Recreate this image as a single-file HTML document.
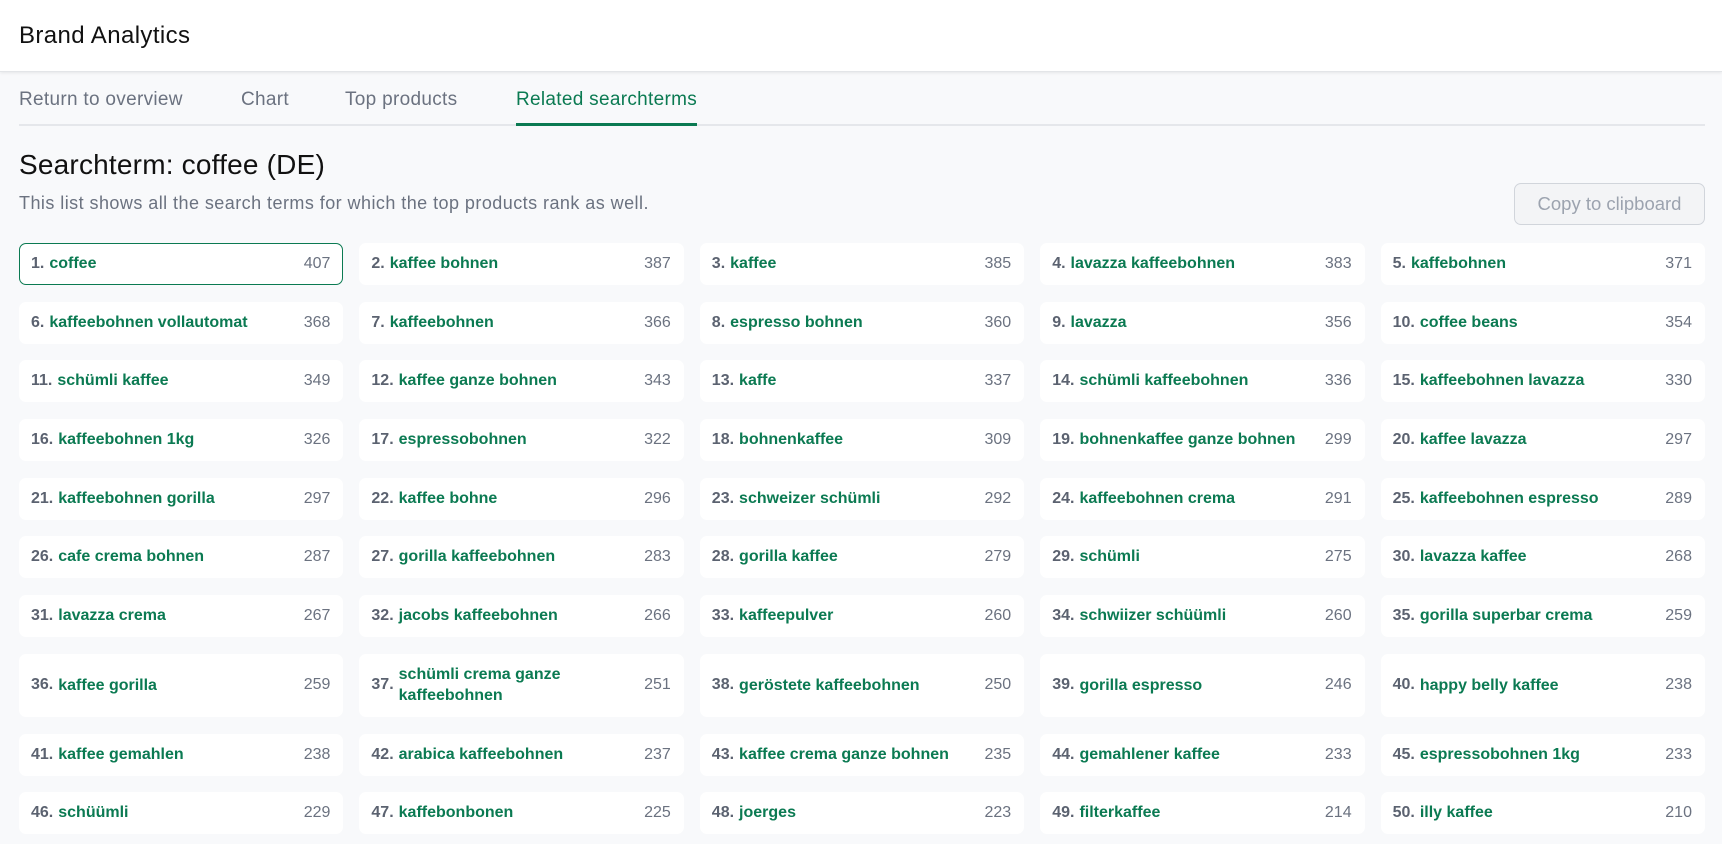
<!DOCTYPE html>
<html><head><meta charset="utf-8"><style>
*{box-sizing:border-box;margin:0;padding:0}
body{width:1722px;height:844px;overflow:hidden;background:#f8f9fb;font-family:"Liberation Sans",sans-serif;color:#111}
.hdr{height:72px;background:#fff;border-bottom:1px solid #e3e5e8;box-shadow:0 1px 3px rgba(0,0,0,.08);padding-left:19px;font-size:24px;letter-spacing:0.4px;line-height:72px;color:#111}
.tabs{position:absolute;top:72px;left:19px;right:17px;height:54px;border-bottom:2px solid #e5e7eb}
.tab{position:absolute;top:17px;font-size:19px;letter-spacing:0.3px;color:#6b7280;}
.tab.act{color:#0b7a52;height:37px;border-bottom:3px solid #0b7a52}
h1{position:absolute;top:149px;left:19px;font-size:28px;letter-spacing:0.2px;font-weight:normal;color:#111}
.sub{position:absolute;top:193px;left:19px;font-size:18px;letter-spacing:0.45px;color:#6b7280}
.btn{position:absolute;left:1514px;top:183px;width:191px;height:42px;border:1px solid #d1d5db;border-radius:7px;background:#f3f4f6;color:#9ca3af;font-size:18.5px;text-align:center;line-height:40px}
.grid{position:absolute;top:243px;left:19px;width:1686px;display:grid;grid-template-columns:repeat(5,1fr);column-gap:16px;row-gap:16.7px}
.c{background:#fff;border-radius:7px;height:42px;display:flex;align-items:center;padding:0 12px 0 11px;font-size:16px;font-weight:bold;border:1px solid #fff}
.c.sel{border-color:#0b7a52}
.c .n{color:#5b6270;margin-right:5px}
.c .t{color:#0b7a52;flex:1}
.c .v{color:#6b7280;font-weight:normal}
.tall{height:63px}
.tall .t{line-height:21px}
</style></head><body>
<div class="hdr">Brand Analytics</div>
<div class="tabs">
<span class="tab" style="left:0">Return to overview</span>
<span class="tab" style="left:222px">Chart</span>
<span class="tab" style="left:326px">Top products</span>
<span class="tab act" style="left:497px">Related searchterms</span>
</div>
<h1>Searchterm: coffee (DE)</h1>
<div class="sub">This list shows all the search terms for which the top products rank as well.</div>
<div class="btn">Copy to clipboard</div>
<div class="grid">
<div class="c sel"><span class="n">1.</span><span class="t">coffee</span><span class="v">407</span></div>
<div class="c"><span class="n">2.</span><span class="t">kaffee bohnen</span><span class="v">387</span></div>
<div class="c"><span class="n">3.</span><span class="t">kaffee</span><span class="v">385</span></div>
<div class="c"><span class="n">4.</span><span class="t">lavazza kaffeebohnen</span><span class="v">383</span></div>
<div class="c"><span class="n">5.</span><span class="t">kaffebohnen</span><span class="v">371</span></div>
<div class="c"><span class="n">6.</span><span class="t">kaffeebohnen vollautomat</span><span class="v">368</span></div>
<div class="c"><span class="n">7.</span><span class="t">kaffeebohnen</span><span class="v">366</span></div>
<div class="c"><span class="n">8.</span><span class="t">espresso bohnen</span><span class="v">360</span></div>
<div class="c"><span class="n">9.</span><span class="t">lavazza</span><span class="v">356</span></div>
<div class="c"><span class="n">10.</span><span class="t">coffee beans</span><span class="v">354</span></div>
<div class="c"><span class="n">11.</span><span class="t">schümli kaffee</span><span class="v">349</span></div>
<div class="c"><span class="n">12.</span><span class="t">kaffee ganze bohnen</span><span class="v">343</span></div>
<div class="c"><span class="n">13.</span><span class="t">kaffe</span><span class="v">337</span></div>
<div class="c"><span class="n">14.</span><span class="t">schümli kaffeebohnen</span><span class="v">336</span></div>
<div class="c"><span class="n">15.</span><span class="t">kaffeebohnen lavazza</span><span class="v">330</span></div>
<div class="c"><span class="n">16.</span><span class="t">kaffeebohnen 1kg</span><span class="v">326</span></div>
<div class="c"><span class="n">17.</span><span class="t">espressobohnen</span><span class="v">322</span></div>
<div class="c"><span class="n">18.</span><span class="t">bohnenkaffee</span><span class="v">309</span></div>
<div class="c"><span class="n">19.</span><span class="t">bohnenkaffee ganze bohnen</span><span class="v">299</span></div>
<div class="c"><span class="n">20.</span><span class="t">kaffee lavazza</span><span class="v">297</span></div>
<div class="c"><span class="n">21.</span><span class="t">kaffeebohnen gorilla</span><span class="v">297</span></div>
<div class="c"><span class="n">22.</span><span class="t">kaffee bohne</span><span class="v">296</span></div>
<div class="c"><span class="n">23.</span><span class="t">schweizer schümli</span><span class="v">292</span></div>
<div class="c"><span class="n">24.</span><span class="t">kaffeebohnen crema</span><span class="v">291</span></div>
<div class="c"><span class="n">25.</span><span class="t">kaffeebohnen espresso</span><span class="v">289</span></div>
<div class="c"><span class="n">26.</span><span class="t">cafe crema bohnen</span><span class="v">287</span></div>
<div class="c"><span class="n">27.</span><span class="t">gorilla kaffeebohnen</span><span class="v">283</span></div>
<div class="c"><span class="n">28.</span><span class="t">gorilla kaffee</span><span class="v">279</span></div>
<div class="c"><span class="n">29.</span><span class="t">schümli</span><span class="v">275</span></div>
<div class="c"><span class="n">30.</span><span class="t">lavazza kaffee</span><span class="v">268</span></div>
<div class="c"><span class="n">31.</span><span class="t">lavazza crema</span><span class="v">267</span></div>
<div class="c"><span class="n">32.</span><span class="t">jacobs kaffeebohnen</span><span class="v">266</span></div>
<div class="c"><span class="n">33.</span><span class="t">kaffeepulver</span><span class="v">260</span></div>
<div class="c"><span class="n">34.</span><span class="t">schwiizer schüümli</span><span class="v">260</span></div>
<div class="c"><span class="n">35.</span><span class="t">gorilla superbar crema</span><span class="v">259</span></div>
<div class="c tall"><span class="n">36.</span><span class="t">kaffee gorilla</span><span class="v">259</span></div>
<div class="c tall"><span class="n">37.</span><span class="t">schümli crema ganze<br>kaffeebohnen</span><span class="v">251</span></div>
<div class="c tall"><span class="n">38.</span><span class="t">geröstete kaffeebohnen</span><span class="v">250</span></div>
<div class="c tall"><span class="n">39.</span><span class="t">gorilla espresso</span><span class="v">246</span></div>
<div class="c tall"><span class="n">40.</span><span class="t">happy belly kaffee</span><span class="v">238</span></div>
<div class="c"><span class="n">41.</span><span class="t">kaffee gemahlen</span><span class="v">238</span></div>
<div class="c"><span class="n">42.</span><span class="t">arabica kaffeebohnen</span><span class="v">237</span></div>
<div class="c"><span class="n">43.</span><span class="t">kaffee crema ganze bohnen</span><span class="v">235</span></div>
<div class="c"><span class="n">44.</span><span class="t">gemahlener kaffee</span><span class="v">233</span></div>
<div class="c"><span class="n">45.</span><span class="t">espressobohnen 1kg</span><span class="v">233</span></div>
<div class="c"><span class="n">46.</span><span class="t">schüümli</span><span class="v">229</span></div>
<div class="c"><span class="n">47.</span><span class="t">kaffebonbonen</span><span class="v">225</span></div>
<div class="c"><span class="n">48.</span><span class="t">joerges</span><span class="v">223</span></div>
<div class="c"><span class="n">49.</span><span class="t">filterkaffee</span><span class="v">214</span></div>
<div class="c"><span class="n">50.</span><span class="t">illy kaffee</span><span class="v">210</span></div>
</div>
</body></html>
